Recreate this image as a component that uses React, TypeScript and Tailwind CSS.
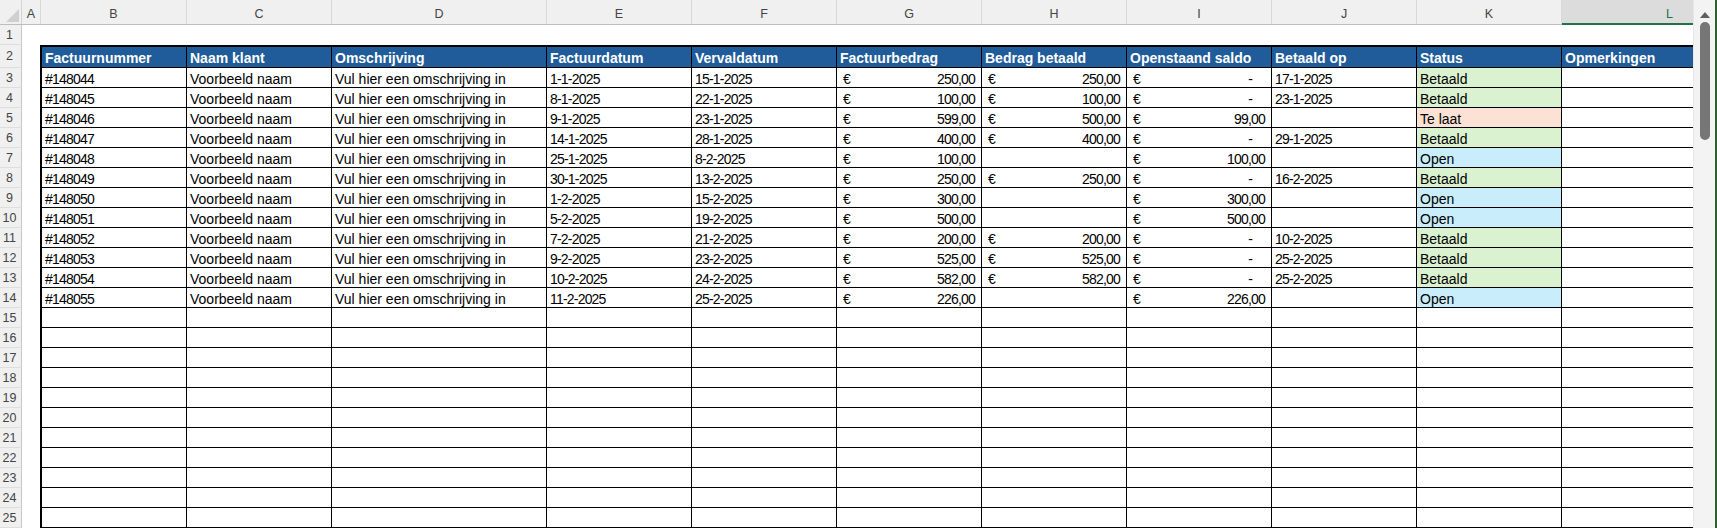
import React from "react";

type Status = "Betaald" | "Te laat" | "Open";

type Row = {
  nr: string;
  datum: string;
  verval: string;
  bedrag: string;
  betaald: string;
  saldo: string;
  betaaldOp: string;
  status: Status;
};

const rows: Row[] = [
  { nr: "#148044", datum: "1-1-2025", verval: "15-1-2025", bedrag: "250,00", betaald: "250,00", saldo: "-", betaaldOp: "17-1-2025", status: "Betaald" },
  { nr: "#148045", datum: "8-1-2025", verval: "22-1-2025", bedrag: "100,00", betaald: "100,00", saldo: "-", betaaldOp: "23-1-2025", status: "Betaald" },
  { nr: "#148046", datum: "9-1-2025", verval: "23-1-2025", bedrag: "599,00", betaald: "500,00", saldo: "99,00", betaaldOp: "", status: "Te laat" },
  { nr: "#148047", datum: "14-1-2025", verval: "28-1-2025", bedrag: "400,00", betaald: "400,00", saldo: "-", betaaldOp: "29-1-2025", status: "Betaald" },
  { nr: "#148048", datum: "25-1-2025", verval: "8-2-2025", bedrag: "100,00", betaald: "", saldo: "100,00", betaaldOp: "", status: "Open" },
  { nr: "#148049", datum: "30-1-2025", verval: "13-2-2025", bedrag: "250,00", betaald: "250,00", saldo: "-", betaaldOp: "16-2-2025", status: "Betaald" },
  { nr: "#148050", datum: "1-2-2025", verval: "15-2-2025", bedrag: "300,00", betaald: "", saldo: "300,00", betaaldOp: "", status: "Open" },
  { nr: "#148051", datum: "5-2-2025", verval: "19-2-2025", bedrag: "500,00", betaald: "", saldo: "500,00", betaaldOp: "", status: "Open" },
  { nr: "#148052", datum: "7-2-2025", verval: "21-2-2025", bedrag: "200,00", betaald: "200,00", saldo: "-", betaaldOp: "10-2-2025", status: "Betaald" },
  { nr: "#148053", datum: "9-2-2025", verval: "23-2-2025", bedrag: "525,00", betaald: "525,00", saldo: "-", betaaldOp: "25-2-2025", status: "Betaald" },
  { nr: "#148054", datum: "10-2-2025", verval: "24-2-2025", bedrag: "582,00", betaald: "582,00", saldo: "-", betaaldOp: "25-2-2025", status: "Betaald" },
  { nr: "#148055", datum: "11-2-2025", verval: "25-2-2025", bedrag: "226,00", betaald: "", saldo: "226,00", betaaldOp: "", status: "Open" },
];

const headers = [
  "Factuurnummer",
  "Naam klant",
  "Omschrijving",
  "Factuurdatum",
  "Vervaldatum",
  "Factuurbedrag",
  "Bedrag betaald",
  "Openstaand saldo",
  "Betaald op",
  "Status",
  "Opmerkingen",
];

// kolombreedtes B..L (L vult de rest tot de scrollbalk)
const widths = [
  "w-[145px]",
  "w-[145px]",
  "w-[215px]",
  "w-[145px]",
  "w-[145px]",
  "w-[145px]",
  "w-[145px]",
  "w-[145px]",
  "w-[145px]",
  "w-[145px]",
  "flex-1",
];

const letterWidths = [
  "w-[19px]",
  "w-[146px]",
  "w-[145px]",
  "w-[215px]",
  "w-[145px]",
  "w-[145px]",
  "w-[145px]",
  "w-[145px]",
  "w-[145px]",
  "w-[145px]",
  "w-[145px]",
];
const letters = ["A", "B", "C", "D", "E", "F", "G", "H", "I", "J", "K"];

const statusBg: Record<Status, string> = {
  Betaald: "bg-[#daf2d0]",
  "Te laat": "bg-[#fbe2d5]",
  Open: "bg-[#caedfb]",
};

function RowNum({ n, tall }: { n: number; tall?: boolean }) {
  return (
    <div
      className={`flex w-[22px] shrink-0 items-center justify-center border-r border-b border-r-[#c6c6c6] border-b-[#dedede] bg-[#f0f0f0] pr-[2px] pt-[1px] text-[12.5px] text-[#444] ${
        tall ? "h-[23px]" : "h-[20px]"
      }`}
    >
      {n}
    </div>
  );
}

function Cell({ w, children, className = "", last }: { w: string; children?: React.ReactNode; className?: string; last?: boolean }) {
  return (
    <div
      className={`${w} h-[20px] shrink-0 overflow-hidden whitespace-nowrap border-b border-black pl-[3px] pt-[3px] text-[14px] leading-[16px] text-black ${
        last ? "" : "border-r"
      } ${className}`}
    >
      {children}
    </div>
  );
}

function Money({ w, value }: { w: string; value: string }) {
  if (!value) return <Cell w={w} />;
  return (
    <Cell w={w} className="flex justify-between !pl-[6px] pr-[6px] tracking-[-0.8px]">
      <span>€</span>
      <span className={value === "-" ? "pr-[13px]" : ""}>{value}</span>
    </Cell>
  );
}

function DataRow({ n, r }: { n: number; r?: Row }) {
  const num = "tracking-[-0.8px]";
  return (
    <div className="flex h-[20px]">
      <RowNum n={n} />
      <div className="w-[18px] shrink-0" />
      <div className="flex flex-1 border-l-2 border-black">
        <Cell w={widths[0]} className={num}>{r?.nr}</Cell>
        <Cell w={widths[1]}>{r ? "Voorbeeld naam" : ""}</Cell>
        <Cell w={widths[2]}>{r ? "Vul hier een omschrijving in" : ""}</Cell>
        <Cell w={widths[3]} className={num}>{r?.datum}</Cell>
        <Cell w={widths[4]} className={num}>{r?.verval}</Cell>
        <Money w={widths[5]} value={r?.bedrag ?? ""} />
        <Money w={widths[6]} value={r?.betaald ?? ""} />
        <Money w={widths[7]} value={r?.saldo ?? ""} />
        <Cell w={widths[8]} className={num}>{r?.betaaldOp}</Cell>
        <Cell w={widths[9]} className={r ? statusBg[r.status] : ""}>{r?.status}</Cell>
        <Cell w={widths[10]} last />
      </div>
    </div>
  );
}

export default function App() {
  const empty = Array.from({ length: 11 }, (_, i) => i + 15);

  return (
    <div className="flex h-[528px] w-[1717px] overflow-hidden bg-white font-['Liberation_Sans',Arial,sans-serif]">
      <div className="flex min-w-0 flex-1 flex-col">
        {/* kolomkoppen */}
        <div className="flex h-[25px] shrink-0 border-b border-[#bdbdbd] bg-[#f0f0f0] text-[12.5px] text-[#444]">
          <div className="flex w-[22px] shrink-0 items-end justify-end border-r border-[#d4d4d4] p-[2px]">
            <svg width="13" height="13" viewBox="0 0 13 13">
              <path d="M13 0 L13 13 L0 13 Z" fill="#cfcfcf" />
            </svg>
          </div>
          {letters.map((l, i) => (
            <div
              key={l}
              className={`${letterWidths[i]} flex shrink-0 items-center justify-center border-r border-[#d9d9d9] pt-[5px]`}
            >
              {l}
            </div>
          ))}
          {/* kolom L loopt door achter de scrollbalk, dus de letter staat rechts */}
          <div className="-mb-px flex flex-1 items-center justify-start border-b-2 border-[#217346] bg-[#dcdcdc] pl-[104px] pt-[5px] text-[#217346]">
            L
          </div>
        </div>

        {/* rij 1 */}
        <div className="flex h-[20px]">
          <RowNum n={1} />
        </div>

        {/* rij 2: tabelkop */}
        <div className="flex h-[23px]">
          <RowNum n={2} tall />
          <div className="w-[18px] shrink-0" />
          <div className="flex flex-1 border-t-2 border-l-2 border-black bg-[#1f5c99]">
            {headers.map((h, i) => (
              <div
                key={h}
                className={`${widths[i]} h-[21px] shrink-0 overflow-hidden whitespace-nowrap border-b border-black pl-[3px] pt-[2px] text-[14px] font-bold leading-[18px] text-white ${
                  i === headers.length - 1 ? "" : "border-r"
                }`}
              >
                {h}
              </div>
            ))}
          </div>
        </div>

        {rows.map((r, i) => (
          <DataRow key={r.nr} n={i + 3} r={r} />
        ))}
        {empty.map((n) => (
          <DataRow key={n} n={n} />
        ))}
      </div>

      {/* verticale scrollbalk */}
      <div className="flex w-[24px] shrink-0">
        <div className="flex flex-1 flex-col items-center border-l border-[#e6e6e6] bg-[#f3f3f3] pt-[12px]">
          <svg width="10" height="6" viewBox="0 0 10 6">
            <path d="M5 0 L10 6 L0 6 Z" fill="#606060" />
          </svg>
          <div className="mt-[4px] h-[118px] w-[10px] rounded-full bg-[#767676]" />
        </div>
        <div className="w-[2px] bg-[#2f5d2c]" />
      </div>
    </div>
  );
}
